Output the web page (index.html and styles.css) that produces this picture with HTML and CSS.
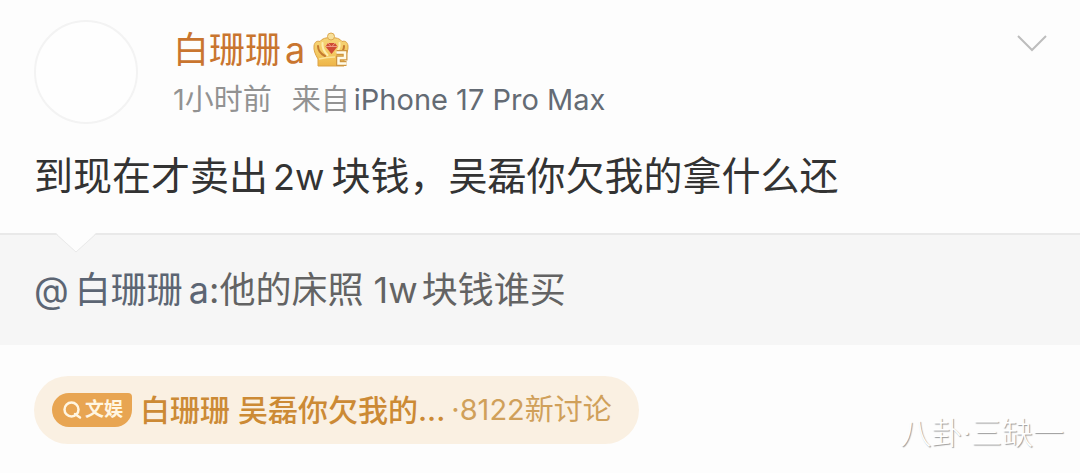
FILE: index.html
```html
<!DOCTYPE html>
<html lang="zh-CN">
<head>
<meta charset="utf-8">
<meta name="viewport" content="width=device-width, initial-scale=1">
<title>微博正文</title>
<link rel="stylesheet" href="styles.css">
</head>
<body>
<article class="post">
  <header class="post-header">
    <a class="avatar" href="#" aria-label="头像"></a>
    <div class="author">
      <div class="name-row">
        <a class="name" href="#">白珊珊<span class="latin">a</span></a>
        <svg class="crown" viewBox="0 0 36 36" aria-hidden="true">
          <defs>
            <linearGradient id="gold" x1="0" y1="0" x2="0" y2="1">
              <stop offset="0" stop-color="#f6d478"/>
              <stop offset="0.6" stop-color="#f3c860"/>
              <stop offset="1" stop-color="#eeb548"/>
            </linearGradient>
          </defs>
          <path d="M5 34V27C2 22 .5 18 1 14c.4-4 3-5.500 6-4.500 2-3 6-4 11-4s9 1 11 4c3-1 5.600.5 6 4.500.5 4-1.500 8-4 13v7z" fill="url(#gold)" stroke="#dda347" stroke-width="1" stroke-linejoin="round"/>
          <path d="M5 14c0 5 3 8 7 10M31 14c0 3-1 5-3 6" fill="none" stroke="#c47a30" stroke-width="2" stroke-linecap="round"/>
          <path d="M9.500 11c-.5 5 2 9 5 12M26.500 11c.5 4-1 7-3 9" fill="none" stroke="#fdeeb0" stroke-width="2" stroke-linecap="round"/>
          <path d="M6 27q8-2 16-2" fill="none" stroke="#fbe59b" stroke-width="1.500"/>
          <circle cx="18" cy="4.500" r="3.500" fill="#f8e09a" stroke="#dda94f" stroke-width="1"/>
          <path d="M15 11h7l2.500 3.500L18.500 22l-6-7.500z" fill="#cf4b35"/>
          <path d="M15 11l3.500 4 3.500-4M13 14.500h11" fill="none" stroke="#ee9a84" stroke-width="1"/>
          <path d="M23.500 20.500h8.500v5.500h-6.500v5.500h8" fill="none" stroke="#cf9640" stroke-width="5"/>
          <path d="M23.500 20.500h8.500v5.500h-6.500v5.500h8" fill="none" stroke="#fffbe8" stroke-width="2.500"/>
        </svg>
      </div>
      <div class="meta"><time>1小时前</time><span>来自<a class="device" href="#">iPhone 17 Pro Max</a></span></div>
    </div>
    <button class="more" type="button" aria-label="更多">
      <svg viewBox="0 0 32 18" aria-hidden="true"><path d="M2 2l14 14L30 2" fill="none" stroke="#bdbdbd" stroke-width="2"/></svg>
    </button>
  </header>
  <p class="content">到现在才卖出<span class="latin">2w</span>块钱，吴磊你欠我的拿什么还</p>
  <blockquote class="quote">
    <svg class="notch" viewBox="0 0 40 20" aria-hidden="true"><path d="M0 0h40L20 19z" fill="#fdfdfd"/><path d="M0 1L20 19 40 1" fill="none" stroke="#e9e9e9"/></svg>
    <p class="quote-text"><a class="mention" href="#">@<span class="mention-name">白珊珊</span>a</a>:他的床照 <span class="amount">1w</span>块钱谁买</p>
  </blockquote>
  <footer class="post-footer">
    <a class="topic" href="#">
      <span class="tag">
        <svg viewBox="0 0 20 20" aria-hidden="true"><circle cx="9.500" cy="9.500" r="7" fill="none" stroke="#fff6e2" stroke-width="2.500"/><path d="M13 14l5 3.500" stroke="#fff6e2" stroke-width="2.500" stroke-linecap="round"/></svg>
        文娱
      </span>
      <span class="topic-title">白珊珊 吴磊你欠我的...</span>
      <span class="topic-count">·8122新讨论</span>
    </a>
  </footer>
  <div class="watermark">八卦<span class="dot">·</span>三缺一</div>
</article>
</body>
</html>
```

FILE: styles.css
```css
* { box-sizing: border-box; }
body {
  margin: 0;
  background: #fdfdfd;
  color: #333;
  font-family: Inter, "Noto Sans CJK SC", sans-serif;
}
a { color: inherit; text-decoration: none; }
p, blockquote { margin: 0; }
.post { position: relative; min-height: 100vh; }
.post-header {
  display: flex;
  align-items: flex-start;
  padding: 20px 32px 0 34px;
}
.avatar {
  flex: none;
  width: 104px;
  height: 104px;
  border: 2px solid #f3f3f3;
  border-radius: 50%;
  background: #fefefe;
}
.author { flex: 1; padding: 8px 0 0 35px; }
.name-row { display: flex; align-items: center; gap: 8px; height: 44px; }
.name { color: #c9752f; font-size: 36px; line-height: 44px; }
.name .latin { margin-left: 4px; }
.crown { width: 36px; height: 36px; }
.meta {
  display: flex;
  gap: 20px;
  margin-top: 10px;
  color: #929292;
  font-size: 29px;
  line-height: 36px;
}
.device { margin-left: 4px; color: #646b74; }
.more {
  padding: 0;
  margin-top: 14px;
  border: 0;
  background: none;
}
.more svg { display: block; width: 32px; height: 18px; }
.content {
  padding: 22px 34px 26px;
  font-size: 39px;
  line-height: 60px;
}
.content .latin { margin: 0 7px 0 5px; font-size: 36px; }
.quote {
  position: relative;
  padding: 27px 34px;
  border-top: 2px solid #e9e9e9;
  background: #f6f6f6;
}
.notch { position: absolute; top: -2px; left: 56px; width: 40px; height: 20px; }
.quote-text { color: #636363; font-size: 36px; line-height: 56px; }
.mention { color: #5c6573; }
.mention-name { margin: 0 6px; }
.amount { margin-right: 4px; }
.post-footer { padding: 31px 34px; }
.topic {
  display: inline-flex;
  align-items: center;
  height: 68px;
  padding: 0 27px 0 18px;
  border-radius: 34px;
  background: #faf0e2;
  font-size: 29px;
  line-height: 40px;
  white-space: nowrap;
}
.tag {
  display: flex;
  align-items: center;
  gap: 3px;
  height: 34px;
  padding: 0 9px 0 10px;
  border-radius: 17px 4px 17px 17px;
  background: #e8a552;
  color: #fff6e2;
  font-size: 19px;
  font-weight: 700;
}
.tag svg { width: 20px; height: 20px; }
.topic-title { margin-left: 8px; color: #cc8a35; font-size: 30px; font-weight: 500; }
.topic-count { margin-left: 6px; color: #d0a05a; }
.watermark {
  position: absolute;
  right: 16px;
  bottom: 20px;
  color: #fff;
  font-family: "Noto Sans CJK SC", sans-serif;
  font-size: 31px;
  font-weight: 300;
  line-height: 44px;
  text-shadow: 1px 1px 1px #999;
}
.watermark .dot { font-family: Inter, sans-serif; }
```
